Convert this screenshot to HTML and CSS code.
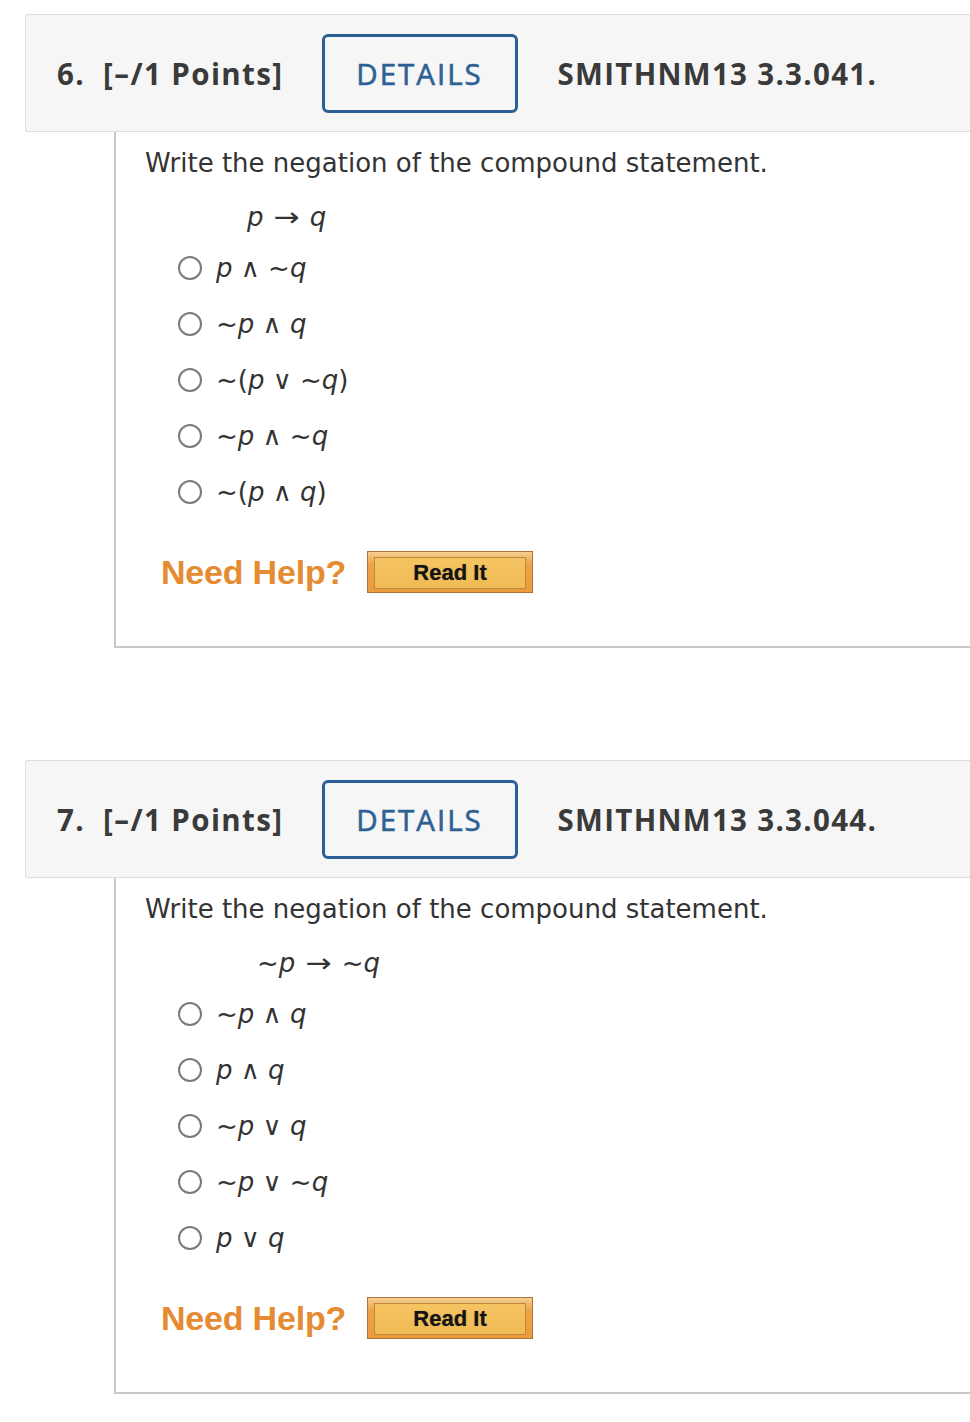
FILE: index.html
```html
<!DOCTYPE html>
<html>
<head>
<meta charset="utf-8">
<link rel="stylesheet" href="styles.css">
</head>
<body>
<div class="page">
  <section class="question">
    <div class="q-header">
      <span class="q-num">6.</span>
      <span class="q-points">[–/1 Points]</span>
      <span class="details-btn">DETAILS</span>
      <span class="q-code">SMITHNM13 3.3.041.</span>
    </div>
    <div class="q-body">
      <p class="prompt">Write the negation of the compound statement.</p>
      <div class="formula"><i>p</i> <span class="arrow">→</span> <i>q</i></div>
      <ul class="options">
        <li><span class="radio"></span><span class="opt"><i>p</i> ∧ ~<i>q</i></span></li>
        <li><span class="radio"></span><span class="opt">~<i>p</i> ∧ <i>q</i></span></li>
        <li><span class="radio"></span><span class="opt">~(<i>p</i> ∨ ~<i>q</i>)</span></li>
        <li><span class="radio"></span><span class="opt">~<i>p</i> ∧ ~<i>q</i></span></li>
        <li><span class="radio"></span><span class="opt">~(<i>p</i> ∧ <i>q</i>)</span></li>
      </ul>
      <div class="help">
        <span class="need-help">Need Help?</span>
        <span class="read-it"><span class="read-it-inner">Read It</span></span>
      </div>
    </div>
  </section>

  <section class="question">
    <div class="q-header">
      <span class="q-num">7.</span>
      <span class="q-points">[–/1 Points]</span>
      <span class="details-btn">DETAILS</span>
      <span class="q-code">SMITHNM13 3.3.044.</span>
    </div>
    <div class="q-body">
      <p class="prompt">Write the negation of the compound statement.</p>
      <div class="formula formula-wide">~<i>p</i> <span class="arrow">→</span> ~<i>q</i></div>
      <ul class="options">
        <li><span class="radio"></span><span class="opt">~<i>p</i> ∧ <i>q</i></span></li>
        <li><span class="radio"></span><span class="opt"><i>p</i> ∧ <i>q</i></span></li>
        <li><span class="radio"></span><span class="opt">~<i>p</i> ∨ <i>q</i></span></li>
        <li><span class="radio"></span><span class="opt">~<i>p</i> ∨ ~<i>q</i></span></li>
        <li><span class="radio"></span><span class="opt"><i>p</i> ∨ <i>q</i></span></li>
      </ul>
      <div class="help">
        <span class="need-help">Need Help?</span>
        <span class="read-it"><span class="read-it-inner">Read It</span></span>
      </div>
    </div>
  </section>
</div>
</body>
</html>
```

FILE: styles.css
```css
html, body {
  margin: 0;
  padding: 0;
  background: #ffffff;
  overflow-x: hidden;
}

.page {
  padding-top: 14px;
  padding-left: 25px;
  font-family: "DejaVu Sans", Verdana, sans-serif;
  color: #333333;
  display: flex;
  flex-direction: column;
  gap: 112px;
}

.question {
  display: flex;
  flex-direction: column;
}

.q-header {
  box-sizing: border-box;
  height: 118px;
  background: #f6f6f6;
  border: 1px solid #dddddd;
  border-right: none;
  border-radius: 3px 0 0 3px;
  display: flex;
  align-items: center;
  padding-left: 31px;
  font-family: "Open Sans", "Noto Sans", sans-serif;
  font-size: 29.5px;
  font-weight: 700;
  color: #3a3a3a;
  letter-spacing: 1.4px;
}

.q-num {
  margin-right: 18px;
}

.q-points {
  margin-right: 38px;
}

.details-btn {
  box-sizing: border-box;
  width: 196px;
  height: 79px;
  border: 3px solid #2c6094;
  border-radius: 6px;
  display: flex;
  align-items: center;
  justify-content: center;
  font-weight: 400;
  -webkit-text-stroke: 0.6px #2d6194;
  color: #2d6194;
  letter-spacing: 2px;
  margin-right: 40px;
  background: #f6f6f6;
}

.q-code {
  letter-spacing: 1.3px;
}

.q-body {
  box-sizing: border-box;
  margin-left: 89px;
  height: 516px;
  border-left: 2px solid #c9c9c9;
  border-bottom: 2px solid #c9c9c9;
  padding: 13px 0 0 29px;
  font-size: 26px;
}

.prompt {
  margin: 0;
  line-height: 36px;
  color: #333333;
}

.formula {
  margin: 18px 0 0 102px;
  line-height: 36px;
  color: #333333;
}

.formula-wide {
  margin-left: 112px;
}

.arrow {
  display: inline-block;
  margin: 0 4px;
  transform: scaleX(1.2);
}

.options {
  list-style: none;
  margin: 5px 0 0 0;
  padding: 0 0 0 33px;
}

.options li {
  height: 56px;
  display: flex;
  align-items: center;
}

.radio {
  box-sizing: border-box;
  width: 24px;
  height: 24px;
  border: 2px solid #7a7a7a;
  border-radius: 50%;
  background: #ffffff;
  margin-right: 14px;
  flex: none;
}

.opt {
  color: #333333;
}

.opt i, .formula i {
  font-style: italic;
}

.help {
  display: flex;
  align-items: center;
  margin-top: 31px;
  padding-left: 16px;
  gap: 21px;
}

.need-help {
  font-family: "Liberation Sans", Arial, sans-serif;
  font-weight: 700;
  font-size: 34px;
  color: #e58b31;
  letter-spacing: -0.2px;
}

.read-it {
  box-sizing: border-box;
  width: 166px;
  height: 42px;
  border: 1px solid #a8743a;
  background: linear-gradient(#f7cf91 0%, #eea449 30%, #eb9a3c 100%);
  padding: 5px 6px 3px 6px;
  display: flex;
}

.read-it-inner {
  flex: 1;
  box-sizing: border-box;
  border: 1px solid #b8893f;
  background: linear-gradient(#f5c462, #f1bb55);
  display: flex;
  align-items: center;
  justify-content: center;
  font-family: "Liberation Sans", Arial, sans-serif;
  font-weight: 700;
  font-size: 22px;
  color: #141414;
  text-shadow: 0 0 1px rgba(0, 0, 0, 0.5);
}
```
